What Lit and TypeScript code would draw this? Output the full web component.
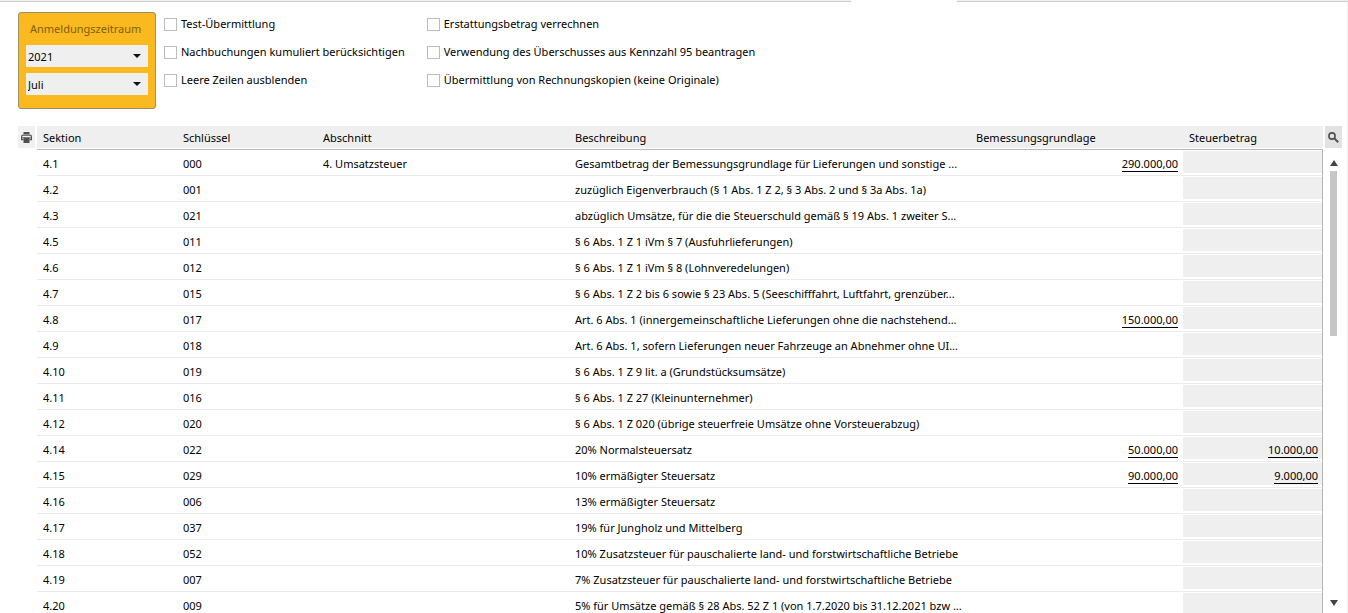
import { LitElement, html, css, nothing } from "lit";
import { customElement, state } from "lit/decorators.js";

interface Row {
  section: string;
  key: string;
  chapter?: string;
  text: string;
  base?: string;
  tax?: string;
}

const ROWS: Row[] = [
  { section: "4.1", key: "000", chapter: "4. Umsatzsteuer", text: "Gesamtbetrag der Bemessungsgrundlage für Lieferungen und sonstige ...", base: "290.000,00" },
  { section: "4.2", key: "001", text: "zuzüglich Eigenverbrauch (§ 1 Abs. 1 Z 2, § 3 Abs. 2 und § 3a Abs. 1a)" },
  { section: "4.3", key: "021", text: "abzüglich Umsätze, für die die Steuerschuld gemäß § 19 Abs. 1 zweiter S..." },
  { section: "4.5", key: "011", text: "§ 6 Abs. 1 Z 1 iVm § 7 (Ausfuhrlieferungen)" },
  { section: "4.6", key: "012", text: "§ 6 Abs. 1 Z 1 iVm § 8 (Lohnveredelungen)" },
  { section: "4.7", key: "015", text: "§ 6 Abs. 1 Z 2 bis 6 sowie § 23 Abs. 5 (Seeschifffahrt, Luftfahrt, grenzüber..." },
  { section: "4.8", key: "017", text: "Art. 6 Abs. 1 (innergemeinschaftliche Lieferungen ohne die nachstehend...", base: "150.000,00" },
  { section: "4.9", key: "018", text: "Art. 6 Abs. 1, sofern Lieferungen neuer Fahrzeuge an Abnehmer ohne UI..." },
  { section: "4.10", key: "019", text: "§ 6 Abs. 1 Z 9 lit. a (Grundstücksumsätze)" },
  { section: "4.11", key: "016", text: "§ 6 Abs. 1 Z 27 (Kleinunternehmer)" },
  { section: "4.12", key: "020", text: "§ 6 Abs. 1 Z 020 (übrige steuerfreie Umsätze ohne Vorsteuerabzug)" },
  { section: "4.14", key: "022", text: "20% Normalsteuersatz", base: "50.000,00", tax: "10.000,00" },
  { section: "4.15", key: "029", text: "10% ermäßigter Steuersatz", base: "90.000,00", tax: "9.000,00" },
  { section: "4.16", key: "006", text: "13% ermäßigter Steuersatz" },
  { section: "4.17", key: "037", text: "19% für Jungholz und Mittelberg" },
  { section: "4.18", key: "052", text: "10% Zusatzsteuer für pauschalierte land- und forstwirtschaftliche Betriebe" },
  { section: "4.19", key: "007", text: "7% Zusatzsteuer für pauschalierte land- und forstwirtschaftliche Betriebe" },
  { section: "4.20", key: "009", text: "5% für Umsätze gemäß § 28 Abs. 52 Z 1 (von 1.7.2020 bis 31.12.2021 bzw ..." },
];

const OPTIONS: string[] = [
  "Test-Übermittlung",
  "Nachbuchungen kumuliert berücksichtigen",
  "Leere Zeilen ausblenden",
  "Erstattungsbetrag verrechnen",
  "Verwendung des Überschusses aus Kennzahl 95 beantragen",
  "Übermittlung von Rechnungskopien (keine Originale)",
];

@customElement("app-root")
export class AppRoot extends LitElement {
  static styles = css`
    :host {
      display: flex;
      flex-direction: column;
      box-sizing: border-box;
      height: 100vh;
      overflow: hidden;
      background: #fff;
      color: #000;
      font: 11px/16px "Noto Sans", "Open Sans", sans-serif;
    }
    .tabline {
      display: grid;
      grid-template-columns: 851fr 106fr 391fr;
      flex: none;
      height: 2px;
    }
    .tabline .edge {
      box-sizing: border-box;
      background: #f0f0f0;
      border-bottom: 1px solid #ccc;
    }
    .page {
      display: flex;
      flex-direction: column;
      flex: 1;
      min-height: 0;
      gap: 17px;
      padding: 10px 5px 0 18px;
      border-right: 1px solid #eee;
    }
    .filters {
      display: flex;
      flex: none;
      gap: 8px;
      align-items: flex-start;
    }
    .period {
      box-sizing: border-box;
      display: flex;
      flex-direction: column;
      gap: 6px;
      width: 138px;
      margin: 0;
      padding: 5px 7px 13px;
      border: 1px solid #9b9066;
      border-radius: 3px;
      background: #fab91f;
    }
    .period-title {
      padding-left: 4px;
      color: #80600f;
      line-height: 21px;
      white-space: nowrap;
    }
    .picker {
      display: grid;
      align-items: center;
    }
    .picker select {
      grid-area: 1 / 1;
      appearance: none;
      width: 100%;
      height: 22px;
      margin: 0;
      padding: 2px 2px 0;
      border: 0;
      border-radius: 0;
      background: #efefef;
      color: #000;
      font: inherit;
    }
    .picker svg {
      grid-area: 1 / 1;
      justify-self: end;
      margin-right: 7px;
      pointer-events: none;
    }
    .checks {
      display: grid;
      grid-template-rows: repeat(3, 16px);
      grid-auto-flow: column;
      column-gap: 22px;
      row-gap: 12px;
      padding-top: 4px;
    }
    .check {
      display: flex;
      align-items: center;
      gap: 4px;
      white-space: nowrap;
    }
    .check input {
      appearance: none;
      box-sizing: border-box;
      width: 13px;
      height: 13px;
      margin: 0;
      border: 1px solid #bcbcbc;
      background: #fff;
    }
    .check input:checked {
      background: #fab91f;
    }
    .grid {
      display: flex;
      flex: 1;
      min-height: 0;
      gap: 2px;
    }
    .tool {
      display: flex;
      flex: none;
      align-items: center;
      justify-content: center;
      width: 17px;
      height: 22px;
      margin: 0;
      padding: 0;
      border: 0;
      background: #f1f1f1;
    }
    .tool.search {
      background: #e2e2e2;
    }
    .sheet {
      flex: 1;
      min-width: 0;
      overflow: hidden;
    }
    table {
      width: 100%;
      table-layout: fixed;
      border-spacing: 0;
    }
    .c-key {
      width: 140px;
    }
    .c-chapter {
      width: 252px;
    }
    .c-base {
      width: 213px;
    }
    .c-tax {
      width: 140px;
    }
    th,
    td {
      box-sizing: border-box;
      padding: 1px 0 0 6px;
      text-align: left;
      font-weight: 400;
      white-space: nowrap;
    }
    th {
      height: 24px;
      border-bottom: 1px solid #b8b8b8;
      background: #efefef;
      box-shadow: inset 0 -1px #fff;
    }
    td {
      height: 26px;
      padding-top: 2px;
      border-bottom: 1px solid #ebebeb;
    }
    td.amount {
      padding: 2px 5px 0 0;
      text-align: right;
    }
    td.tax {
      padding: 1px 0 2px;
      border-right: 1px solid #b4b4b4;
    }
    .box {
      height: 22px;
      box-sizing: border-box;
      padding: 5px 4px 0 0;
      background: #efefef;
      text-align: right;
    }
    .sum {
      display: inline-block;
      border-bottom: 1px solid #000;
      color: inherit;
      line-height: 14px;
      text-decoration: none;
    }
    .rail {
      display: flex;
      flex: none;
      flex-direction: column;
      align-items: center;
      width: 17px;
    }
    .track {
      display: flex;
      flex: 1;
      flex-direction: column;
      align-items: center;
      gap: 5px;
      padding: 12px 0 7px;
    }
    .thumb {
      width: 7px;
      height: 37%;
      background: #c6c6c6;
    }
    .down {
      margin-top: auto;
    }
    svg {
      display: block;
    }
  `;

  @state() private year = "2021";
  @state() private month = "Juli";

  private picker(label: string, value: string, values: string[]) {
    return html`<span class="picker">
      <select aria-label=${label}>
        ${values.map((v) => html`<option ?selected=${v === value}>${v}</option>`)}
      </select>
      <svg width="8" height="4" viewBox="0 0 8 4" aria-hidden="true"><path d="M0 0h8L4 4z" fill="#111" /></svg>
    </span>`;
  }

  private sum(value?: string) {
    return value ? html`<a class="sum" href="#">${value}</a>` : nothing;
  }

  render() {
    return html`
      <div class="tabline"><span class="edge"></span><span></span><span class="edge"></span></div>
      <main class="page">
        <form class="filters">
          <div class="period" role="group" aria-labelledby="period">
            <span class="period-title" id="period">Anmeldungszeitraum</span>
            ${this.picker("Jahr", this.year, ["2020", "2021", "2022"])}
            ${this.picker("Monat", this.month, ["Juni", "Juli", "August"])}
          </div>
          <div class="checks">
            ${OPTIONS.map((o) => html`<label class="check"><input type="checkbox" /><span>${o}</span></label>`)}
          </div>
        </form>
        <section class="grid">
          <button class="tool" type="button" aria-label="Drucken">
            <svg width="11" height="11" viewBox="0 0 11 11" fill="none" stroke="#505050">
              <path d="M2.5 0h6v2.2h-6z" fill="#505050" stroke="none" />
              <path d="M2.5 7.6H.6V4.7q0-1.5 1.5-1.5h6.8q1.5 0 1.5 1.5v2.9H8.5" stroke-width="1.2" />
              <path d="M1.2 5.8h8.6" stroke-width="1" />
              <path d="M2.5 5.8h6V11h-6z" fill="#505050" stroke="none" />
            </svg>
          </button>
          <div class="sheet">
            <table>
              <colgroup>
                <col class="c-key" /><col class="c-key" /><col class="c-chapter" /><col />
                <col class="c-base" /><col class="c-tax" />
              </colgroup>
              <thead>
                <tr>
                  <th>Sektion</th><th>Schlüssel</th><th>Abschnitt</th><th>Beschreibung</th>
                  <th>Bemessungsgrundlage</th><th>Steuerbetrag</th>
                </tr>
              </thead>
              <tbody>
                ${ROWS.map(
                  (r) => html`<tr>
                    <td>${r.section}</td>
                    <td>${r.key}</td>
                    <td>${r.chapter ?? nothing}</td>
                    <td>${r.text}</td>
                    <td class="amount">${this.sum(r.base)}</td>
                    <td class="tax"><div class="box">${this.sum(r.tax)}</div></td>
                  </tr>`
                )}
              </tbody>
            </table>
          </div>
          <div class="rail">
            <button class="tool search" type="button" aria-label="Suchen">
              <svg width="11" height="11" viewBox="0 0 11 11" fill="none" stroke="#505050">
                <circle cx="4" cy="4" r="3.1" stroke-width="1.6" />
                <path d="M6.4 6.4l3.8 3.8" stroke-width="2" />
              </svg>
            </button>
            <div class="track">
              <svg width="8" height="6" viewBox="0 0 8 6" aria-hidden="true"><path d="M0 6h8L4 0z" fill="#444" /></svg>
              <div class="thumb"></div>
              <svg class="down" width="8" height="6" viewBox="0 0 8 6" aria-hidden="true"><path d="M0 0h8L4 6z" fill="#444" /></svg>
            </div>
          </div>
        </section>
      </main>
    `;
  }
}
